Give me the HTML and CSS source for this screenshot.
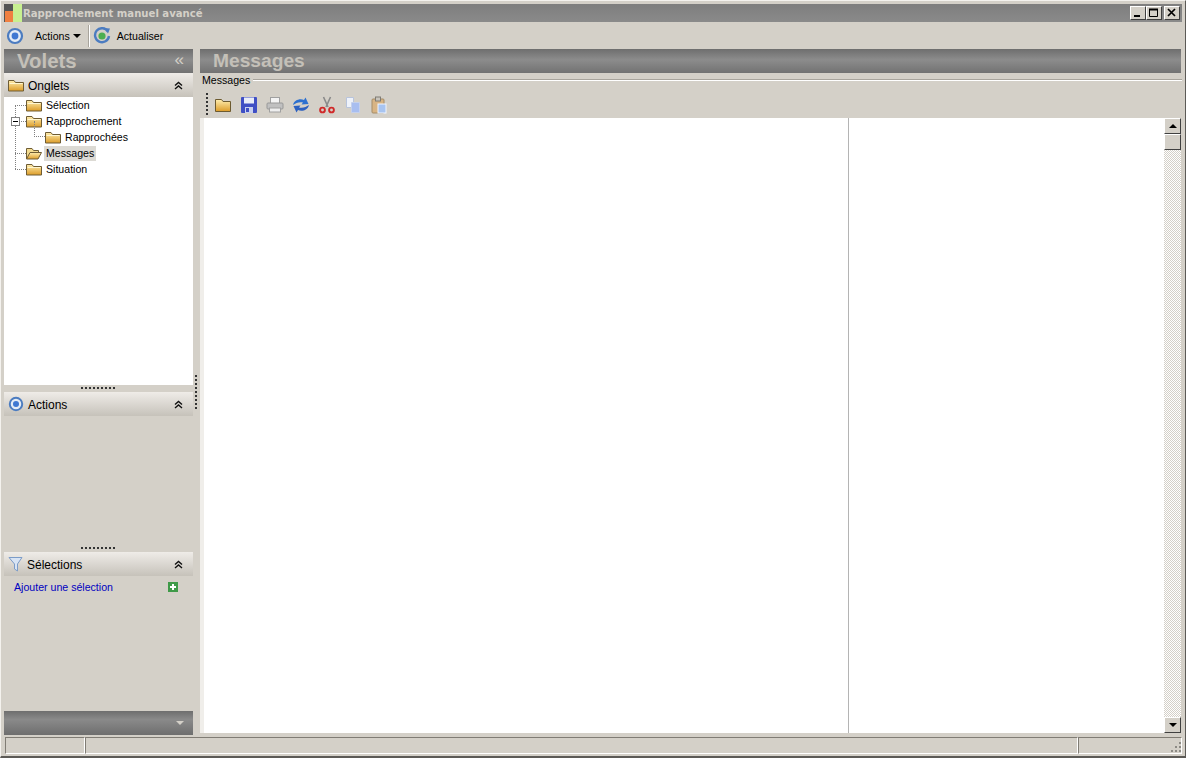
FILE: index.html
```html
<!DOCTYPE html>
<html lang="fr">
<head>
<meta charset="utf-8">
<title>Rapprochement manuel avancé</title>
<link rel="stylesheet" href="styles.css">
</head>
<body>
<svg class="defs" width="0" height="0">
  <defs>
    <linearGradient id="fg" x1="0" y1="0" x2="0" y2="1"><stop offset="0" stop-color="#ffeeb0"/><stop offset="1" stop-color="#dc9c28"/></linearGradient>
    <symbol id="folder" viewBox="0 0 16 16">
      <path d="M.5 14V3.500h5.500l1.500 2h8V14z" fill="url(#fg)" stroke="#6e5c34"/>
      <path d="M1.500 6.500h13" stroke="#fff6d0"/>
    </symbol>
    <symbol id="folder-open" viewBox="0 0 16 16">
      <path d="M.5 14V3.500h5.500l1.500 2h5v2" fill="#f4dc90" stroke="#6e5c34"/>
      <path d="M.5 14l3.500-6.500h11.500L12 14z" fill="url(#fg)" stroke="#6e5c34"/>
    </symbol>
    <symbol id="target" viewBox="0 0 18 18">
      <circle cx="9" cy="9" r="7" fill="#e4ecf6" stroke="#4c7cc0" stroke-width="2.200"/>
      <circle cx="9" cy="9" r="3.400" fill="#3f78d2"/>
    </symbol>
    <symbol id="chev-up" viewBox="0 0 9 9">
      <path d="M1 4.500l3.500-3 3.500 3M1 8l3.500-3 3.500 3" fill="none" stroke="#111" stroke-width="1.400"/>
    </symbol>
  </defs>
</svg>
<div class="window">
  <header class="titlebar">
    <svg class="app-icon" width="18" height="18" viewBox="0 0 18 18">
      <rect width="18" height="18" fill="#555"/>
      <rect x="1" y="7" width="8" height="11" fill="#f08040"/>
      <rect x="9" y="0" width="9" height="18" fill="#c8f090"/>
    </svg>
    <span class="title-text">Rapprochement manuel avancé</span>
    <div class="win-buttons">
      <div class="win-btn"><svg width="10" height="10" viewBox="0 0 10 10"><rect x="1" y="7" width="6" height="2" fill="#000"/></svg></div>
      <div class="win-btn"><svg width="10" height="10" viewBox="0 0 10 10"><path d="M.5 1.500h8v7h-8z" fill="none" stroke="#000"/><path d="M0 1.500h9" stroke="#000" stroke-width="2"/></svg></div>
      <div class="win-btn win-btn-close"><svg width="10" height="10" viewBox="0 0 10 10"><path d="M1 1l7 7M8 1L1 8" stroke="#000" stroke-width="1.700"/></svg></div>
    </div>
  </header>

  <nav class="menubar">
    <svg class="icon-target" width="18" height="18"><use href="#target"/></svg>
    <span class="menu-item">Actions</span><span class="caret"></span>
    <span class="menu-sep"></span>
    <svg class="icon-refresh" width="18" height="18" viewBox="0 0 18 18">
      <path d="M15 4.500A7 7 0 1 0 16 9" fill="none" stroke="#4c7cc0" stroke-width="2.400"/>
      <path d="M11 1l6 .5-2 5z" fill="#4c7cc0"/>
      <circle cx="9" cy="9" r="3.600" fill="#4cae50"/>
    </svg>
    <span class="menu-item menu-item-refresh">Actualiser</span>
  </nav>

  <main class="workspace">
    <aside class="sidebar">
      <div class="dark-head">
        <span class="dark-title dark-title-volets">Volets</span>
        <span class="collapse">«</span>
      </div>

      <section class="pane pane-tabs">
        <div class="pane-head">
          <svg class="pane-icon" width="16" height="16"><use href="#folder"/></svg>
          <span class="pane-title">Onglets</span>
          <svg class="chev" width="9" height="9"><use href="#chev-up"/></svg>
        </div>
        <div class="tree">
          <span class="tree-trunk"></span>
          <div class="tree-row"><span class="twig"></span><svg width="16" height="16"><use href="#folder"/></svg><span class="node">Sélection</span></div>
          <div class="tree-row"><span class="twig"></span><span class="minus"></span><svg width="16" height="16"><use href="#folder"/></svg><span class="node">Rapprochement</span></div>
          <div class="tree-row tree-row-child"><span class="twig twig-child"></span><svg width="16" height="16"><use href="#folder"/></svg><span class="node">Rapprochées</span></div>
          <div class="tree-row"><span class="twig"></span><svg width="16" height="16"><use href="#folder-open"/></svg><span class="node node-selected">Messages</span></div>
          <div class="tree-row"><span class="twig"></span><svg width="16" height="16"><use href="#folder"/></svg><span class="node">Situation</span></div>
        </div>
      </section>
      <div class="grip"></div>

      <section class="pane pane-actions">
        <div class="pane-head">
          <svg class="pane-icon" width="16" height="16"><use href="#target"/></svg>
          <span class="pane-title">Actions</span>
          <svg class="chev" width="9" height="9"><use href="#chev-up"/></svg>
        </div>
      </section>
      <div class="grip"></div>

      <section class="pane pane-selections">
        <div class="pane-head">
          <svg class="pane-icon" width="16" height="16" viewBox="0 0 16 16"><path d="M1 1.500h13L9.500 8v7l-3-2V8z" fill="#d8e4f4" stroke="#7c9cc8"/></svg>
          <span class="pane-title pane-title-tight">Sélections</span>
          <svg class="chev" width="9" height="9"><use href="#chev-up"/></svg>
        </div>
        <div class="add-row">
          <span class="add-link">Ajouter une sélection</span>
          <svg width="10" height="10" viewBox="0 0 10 10"><rect width="10" height="10" fill="#3f9a48"/><path d="M5 2v6M2 5h6" stroke="#fff" stroke-width="2"/></svg>
        </div>
      </section>

      <div class="dark-foot"><span class="foot-caret"></span></div>
    </aside>

    <div class="v-split"><span class="v-grip"></span></div>

    <section class="content">
      <div class="dark-head">
        <span class="dark-title dark-title-messages">Messages</span>
      </div>
      <div class="group-label"><span>Messages</span><span class="group-line"></span></div>
      <div class="toolbar">
        <span class="tool-grip"></span>
        <svg class="tool" width="18" height="18" viewBox="0 0 18 18"><path d="M1.500 15.500v-12h6l1.500 2h7.500v10z" fill="url(#fg)" stroke="#6c5a30"/></svg>
        <svg class="tool" width="18" height="18" viewBox="0 0 18 18"><rect x="1" y="1" width="16" height="16" rx="1" fill="#3f4fc4"/><rect x="4" y="1.500" width="10" height="6" fill="#e8ecf8"/><rect x="5" y="11" width="8" height="6" fill="#c8d0f0"/><rect x="6" y="12" width="3" height="4" fill="#3f4fc4"/></svg>
        <svg class="tool" width="18" height="18" viewBox="0 0 18 18"><rect x="4.500" y="1.500" width="9" height="6" fill="#f4f4f4" stroke="#a0a0a0"/><rect x="1" y="7" width="16" height="6" rx="1" fill="#c0c0c0" stroke="#989898"/><rect x="3.500" y="12" width="11" height="4" fill="#eee" stroke="#a0a0a0"/></svg>
        <svg class="tool" width="18" height="18" viewBox="0 0 18 18"><path d="M1 9c1-5 7-7 11-5l1.500-2.500L16.500 8l-7 .5 1.500-2C7 5.500 4 7 1 9z" fill="#2c70d0"/><path d="M17 9c-1 5-7 7-11 5l-1.500 2.500L1.500 10l7-.5-1.500 2c4 1 7-.5 10-2.500z" fill="#2c60c0"/></svg>
        <svg class="tool" width="18" height="18" viewBox="0 0 18 18"><path d="M5.500 1l4.500 10M12.500 1L8 11" stroke="#8a8a8a" stroke-width="1.600" fill="none"/><circle cx="4.500" cy="14" r="2.400" fill="none" stroke="#d02828" stroke-width="1.900"/><circle cx="13.500" cy="14" r="2.400" fill="none" stroke="#d02828" stroke-width="1.900"/></svg>
        <svg class="tool" width="18" height="18" viewBox="0 0 18 18"><path d="M2.500 1.500h7v10h-7z" fill="#eef2fa" stroke="#b8c4dc"/><path d="M7.500 6.500h8v10h-8z" fill="#a8bef0" stroke="#c4d0ec"/></svg>
        <svg class="tool" width="18" height="18" viewBox="0 0 18 18"><rect x="2" y="3" width="12" height="14" rx="1" fill="#d8b484" stroke="#a48c68"/><rect x="5.500" y="1" width="5" height="4" fill="#c8c4bc" stroke="#807c74"/><rect x="8" y="8" width="8" height="9" fill="#a8c4f0" stroke="#f0f4fc"/></svg>
      </div>
      <div class="grid-area">
        <div class="grid">
          <div class="grid-left"></div>
          <div class="grid-right"></div>
        </div>
        <div class="scrollbar">
          <div class="sb-btn"><span class="arrow-up"></span></div>
          <div class="sb-thumb"></div>
          <div class="sb-track"></div>
          <div class="sb-btn"><span class="arrow-down"></span></div>
        </div>
      </div>
    </section>
  </main>

  <footer class="statusbar">
    <div class="status-cell status-a"></div>
    <div class="status-cell status-b"></div>
    <div class="status-cell status-c">
      <svg class="resize" width="12" height="12" viewBox="0 0 12 12"><path d="M10 1h2v2h-2zM6 5h2v2H6zM10 5h2v2h-2zM2 9h2v2H2zM6 9h2v2H6zM10 9h2v2h-2z" fill="#8c8a84"/></svg>
    </div>
  </footer>
</div>
</body>
</html>
```
FILE: styles.css
```css
* { box-sizing: border-box; }
html, body { margin: 0; height: 100%; }
body {
  width: 1186px;
  height: 758px;
  overflow: hidden;
  background: #d4d0c8;
  font-family: "Liberation Sans", Arial, sans-serif;
  font-size: 10.6px;
  color: #000;
}
.defs { position: absolute; }
.window {
  width: 1186px;
  height: 758px;
  display: flex;
  flex-direction: column;
  background: #d4d0c8;
  border-top: 1px solid #f4f2ee;
  border-left: 1px solid #f4f2ee;
  border-right: 1px solid #5c5a56;
  border-bottom: 2px solid #5c5a56;
  padding: 3px 3px 0;
}

/* title bar */
.titlebar {
  height: 18px;
  flex: none;
  display: flex;
  align-items: center;
  background: linear-gradient(#7e7e7e, #8a8a8a);
}
.app-icon { flex: none; }
.title-text {
  margin-left: 1px;
  font-family: "DejaVu Sans", sans-serif;
  font-weight: bold;
  font-size: 10.1px;
  color: #d4d0c8;
}
.win-buttons { margin-left: auto; display: flex; margin-right: 2px; }
.win-btn {
  width: 16px;
  height: 14px;
  display: flex;
  align-items: center;
  justify-content: center;
  background: #d4d0c8;
  border: 1px solid;
  border-color: #fff #404040 #404040 #fff;
}
.win-btn-close { margin-left: 2px; }

/* menu bar */
.menubar {
  height: 27px;
  flex: none;
  display: flex;
  align-items: center;
}
.icon-target { margin-left: 2px; }
.menu-item { margin-left: 11px; }
.caret {
  margin: 1px 0 0 3px;
  border-left: 4px solid transparent;
  border-right: 4px solid transparent;
  border-top: 4px solid #000;
}
.menu-sep {
  width: 2px;
  height: 22px;
  margin-left: 7px;
  background: #a8a49c;
  border-right: 1px solid #fff;
}
.icon-refresh { margin-left: 3px; }
.menu-item.menu-item-refresh { margin-left: 6px; }

/* workspace */
.workspace {
  flex: 1;
  min-height: 0;
  display: flex;
}
.sidebar {
  width: 189px;
  flex: none;
  display: flex;
  flex-direction: column;
}
.dark-head {
  height: 24px;
  flex: none;
  display: flex;
  align-items: center;
  background: linear-gradient(#6e6e6e, #8c8c8c 45%, #727272);
}
.dark-title {
  margin-left: 13px;
  font-weight: bold;
  color: #c4c0b8;
}
.dark-title-volets { font-size: 20.4px; }
.dark-title-messages { font-size: 19.2px; }
.collapse {
  margin-left: auto;
  margin-right: 9px;
  padding-bottom: 3px;
  font-size: 17px;
  line-height: 15px;
  color: #d4d0c8;
}
.pane { display: flex; flex-direction: column; }
.pane-tabs { height: 312px; flex: none; }
.pane-actions { height: 153px; flex: none; }
.pane-selections { flex: 1; min-height: 0; }
.pane-head {
  height: 24px;
  flex: none;
  display: flex;
  align-items: center;
  background: linear-gradient(#efece8, #c6c2ba);
  font-size: 12px;
}
.pane-icon { margin-left: 4px; }
.pane-title { margin: 1px 0 0 4px; }
.pane-title-tight { margin-left: 3px; }
.chev { margin-left: auto; margin-right: 10px; }

.tree {
  position: relative;
  flex: 1;
  background: #fff;
}
.tree-trunk {
  position: absolute;
  left: 11px;
  top: 8px;
  height: 64px;
  border-left: 1px dotted #808080;
}
.tree-row {
  position: relative;
  height: 16px;
  display: flex;
  align-items: center;
  padding-left: 22px;
}
.tree-row-child { padding-left: 41px; }
.twig {
  position: absolute;
  left: 11px;
  top: 8px;
  width: 11px;
  border-top: 1px dotted #808080;
}
.twig-child { left: 30px; top: -8px; height: 16px; border-top: 0; border-left: 1px dotted #808080; border-bottom: 1px dotted #808080; }
.minus {
  position: absolute;
  left: 7px;
  top: 4px;
  width: 9px;
  height: 9px;
  background: linear-gradient(#000, #000) center / 5px 1px no-repeat #fff;
  border: 1px solid #808080;
}
.node { margin-left: 2px; padding: 1px 2px; line-height: 13px; }
.node-selected { background: #dcdad4; }

.grip {
  height: 7px;
  flex: none;
  display: flex;
  justify-content: center;
  padding-top: 2px;
}
.grip::before {
  content: "";
  width: 35px;
  height: 2px;
  background: repeating-linear-gradient(90deg, #333 0 2px, transparent 2px 4px);
}
.add-row {
  display: flex;
  align-items: center;
  justify-content: space-between;
  height: 22px;
  padding: 0 15px 0 10px;
}
.add-link { color: #0000c0; }
.dark-foot {
  height: 24px;
  flex: none;
  display: flex;
  align-items: center;
  justify-content: flex-end;
  padding-right: 9px;
  background: linear-gradient(#6e6e6e, #8a8a8a 35%, #6e6e6e);
}
.foot-caret {
  border-left: 4px solid transparent;
  border-right: 4px solid transparent;
  border-top: 4px solid #d4d0c8;
}

.v-split {
  width: 7px;
  flex: none;
  display: flex;
  align-items: center;
}
.v-grip {
  width: 2px;
  height: 35px;
  margin-left: 2px;
  background: repeating-linear-gradient(#333 0 2px, transparent 2px 4px);
}

/* content */
.content {
  flex: 1;
  min-width: 0;
  display: flex;
  flex-direction: column;
  padding: 0 1px 2px 0;
}
.group-label {
  height: 14px;
  flex: none;
  display: flex;
  align-items: center;
  padding-left: 2px;
}
.group-line {
  flex: 1;
  margin: 0 -1px 0 3px;
  height: 2px;
  background: #a8a49c;
  border-bottom: 1px solid #fff;
}
.toolbar {
  height: 31px;
  flex: none;
  display: flex;
  align-items: center;
  padding-left: 6px;
  padding-top: 4px;
}
.tool-grip {
  width: 2px;
  height: 24px;
  margin-right: 6px;
  background: repeating-linear-gradient(#333 0 2px, transparent 2px 4px);
}
.tool { margin-right: 8px; flex: none; }
.grid-area {
  flex: 1;
  min-height: 0;
  display: flex;
  margin-left: 4px;
  box-shadow: -4px 0 0 #f0eeea;
}
.grid {
  flex: 1;
  display: flex;
  background: #fff;
}
.grid-left { width: 645px; border-right: 1px solid #b4b4b4; }
.grid-right { flex: 1; }
.scrollbar {
  width: 17px;
  flex: none;
  display: flex;
  flex-direction: column;
}
.sb-btn, .sb-thumb {
  flex: none;
  height: 16px;
  display: flex;
  align-items: center;
  justify-content: center;
  background: #d4d0c8;
  border: 1px solid;
  border-color: #fff #404040 #404040 #fff;
}
.sb-track {
  flex: 1;
  background: repeating-conic-gradient(#fff 0 25%, #d4d0c8 0 50%) 0 0 / 2px 2px;
}
.arrow-up, .arrow-down {
  border-left: 4px solid transparent;
  border-right: 4px solid transparent;
}
.arrow-up { border-bottom: 4px solid #000; }
.arrow-down { border-top: 4px solid #000; }

/* status bar */
.statusbar {
  height: 21px;
  flex: none;
  display: flex;
  padding: 2px 0 0 1px;
}
.status-cell {
  height: 17px;
  border: 1px solid;
  border-color: #807c74 #fff #fff #807c74;
}
.status-a { width: 80px; }
.status-b { flex: 1; }
.status-c { width: 104px; display: flex; justify-content: flex-end; align-items: flex-end; }
```
